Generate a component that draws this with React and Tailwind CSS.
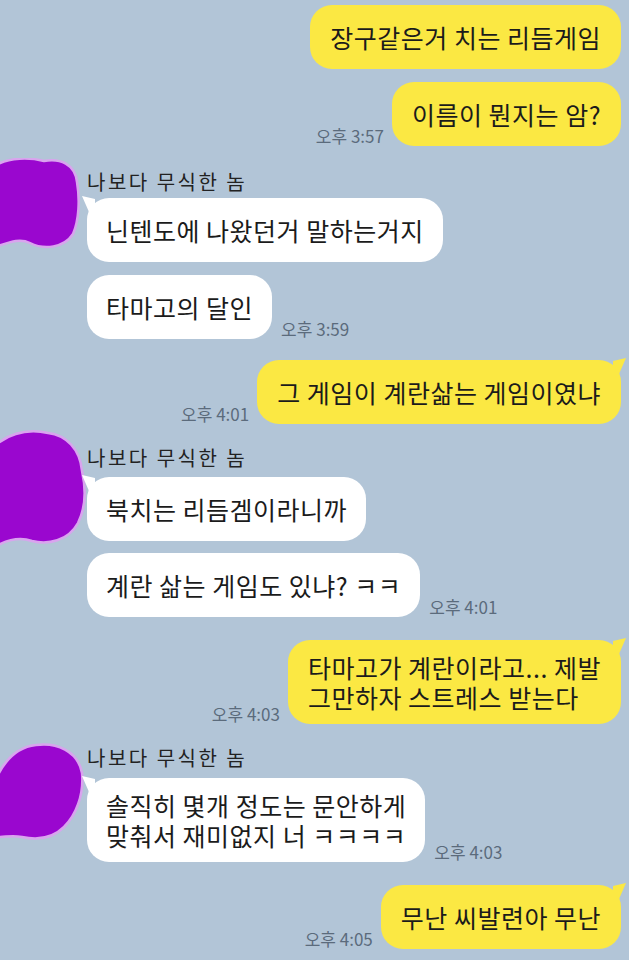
import React from 'react';

const font = { fontFamily: '"Noto Sans CJK KR", "Noto Sans", sans-serif' };

function Tail({ side, color }) {
  // small pointed tail at the top outer corner of the first bubble
  if (side === 'right') {
    return (
      <svg className="absolute -right-[6px] -top-[2px]" width="14" height="16" viewBox="0 0 14 16">
        <path d="M0 3 L13 0 L6 16 L0 16 Z" fill={color} />
      </svg>
    );
  }
  return (
    <svg className="absolute -left-[6px] -top-[2px]" width="14" height="16" viewBox="0 0 14 16">
      <path d="M14 3 L1 0 L8 16 L14 16 Z" fill={color} />
    </svg>
  );
}

function Time({ children, className = '' }) {
  return (
    <span className={`text-[17px] leading-[18px] text-[#5b6b7c] whitespace-nowrap ${className}`}>{children}</span>
  );
}

function Sent({ lines, time, tail, className = '', multi }) {
  return (
    <div className={`flex items-end justify-end gap-[8px] ${className}`}>
      {time && <Time className="mb-[1px]">{time}</Time>}
      <div
        className={`relative bg-[#fbe843] rounded-[22px] px-[20px] text-[25px] tracking-[0.5px] text-[#1b1b1b] ${
          multi ? 'py-[12px] leading-[30px]' : 'py-[16px] leading-[32px]'
        }`}
      >
        {tail && <Tail side="right" color="#fbe843" />}
        {lines.map((l, i) => (
          <div key={i} className="whitespace-nowrap">{l}</div>
        ))}
      </div>
    </div>
  );
}

function Received({ lines, time, tail, className = '', multi }) {
  return (
    <div className={`flex items-end gap-[9px] ${className}`}>
      <div
        className={`relative bg-white rounded-[22px] px-[19px] text-[25px] tracking-[0.5px] text-[#1b1b1b] ${
          multi ? 'py-[12px] leading-[30px]' : 'py-[16px] leading-[32px]'
        }`}
      >
        {tail && <Tail side="left" color="#ffffff" />}
        {lines.map((l, i) => (
          <div key={i} className="whitespace-nowrap">{l}</div>
        ))}
      </div>
      {time && <Time className="mb-[1px]">{time}</Time>}
    </div>
  );
}

function Blob({ d, h, className = '' }) {
  return (
    <svg className={className} width="90" height={h} viewBox={`0 0 90 ${h}`}>
      <path d={d} fill="#9a07cf" stroke="#d9a4ee" strokeWidth="2.5" />
    </svg>
  );
}

function Group({ avatar, children, className = '' }) {
  return (
    <div className={`flex items-start ${className}`}>
      <div className="w-[87px] shrink-0 h-0">{avatar}</div>
      <div className="flex flex-col items-start">
        <div className="text-[20px] leading-[24px] tracking-[2.5px] text-[#222] whitespace-nowrap">나보다 무식한 놈</div>
        {children}
      </div>
    </div>
  );
}

export default function App() {
  return (
    <div className="w-[629px] h-[960px] overflow-hidden bg-[#b2c5d7] flex flex-col pt-[5px] pr-[8px]" style={font}>
      <Sent lines={['장구같은거 치는 리듬게임']} />
      <Sent lines={['이름이 뭔지는 암?']} time="오후 3:57" className="mt-[13px]" />

      <Group
        className="mt-[24px]"
        avatar={
          <Blob
            h={92}
            className="-mt-[12px]"
            d="M-2 6 C10 0 28 -1 44 3 C60 0 75 6 77 24 C80 42 79 62 73 76 C64 90 44 92 30 85 C20 80 10 84 -2 88 Z"
          />
        }
      >
        <Received lines={['닌텐도에 나왔던거 말하는거지']} tail className="mt-[4px]" />
        <Received lines={['타마고의 달인']} time="오후 3:59" className="mt-[13px]" />
      </Group>

      <Sent lines={['그 게임이 계란삶는 게임이였냐']} time="오후 4:01" tail className="mt-[21px]" />

      <Group
        className="mt-[22px]"
        avatar={
          <Blob
            h={118}
            className="-mt-[17px]"
            d="M-2 14 C12 4 30 0 48 4 C66 6 80 20 82 42 C86 60 86 78 78 94 C68 112 48 116 32 112 C20 108 10 110 -2 116 Z"
          />
        }
      >
        <Received lines={['북치는 리듬겜이라니까']} tail className="mt-[7px]" />
        <Received lines={['계란 삶는 게임도 있냐? ㅋㅋ']} time="오후 4:01" className="mt-[12px]" />
      </Group>

      <Sent
        lines={['타마고가 계란이라고... 제발', '그만하자 스트레스 받는다']}
        time="오후 4:03"
        tail
        multi
        className="mt-[23px]"
      />

      <Group
        className="mt-[22px]"
        avatar={
          <Blob
            h={100}
            className="-mt-[3px]"
            d="M-2 32 C6 16 18 4 36 2 C56 -1 78 8 82 30 C84 52 76 72 64 84 C52 96 36 97 22 94 C12 92 6 94 -2 94 Z"
          />
        }
      >
        <Received
          lines={['솔직히 몇개 정도는 문안하게', '맞춰서 재미없지 너 ㅋㅋㅋㅋ']}
          time="오후 4:03"
          tail
          multi
          className="mt-[8px]"
        />
      </Group>

      <Sent lines={['무난 씨발련아 무난']} time="오후 4:05" tail className="mt-[23px]" />
    </div>
  );
}
